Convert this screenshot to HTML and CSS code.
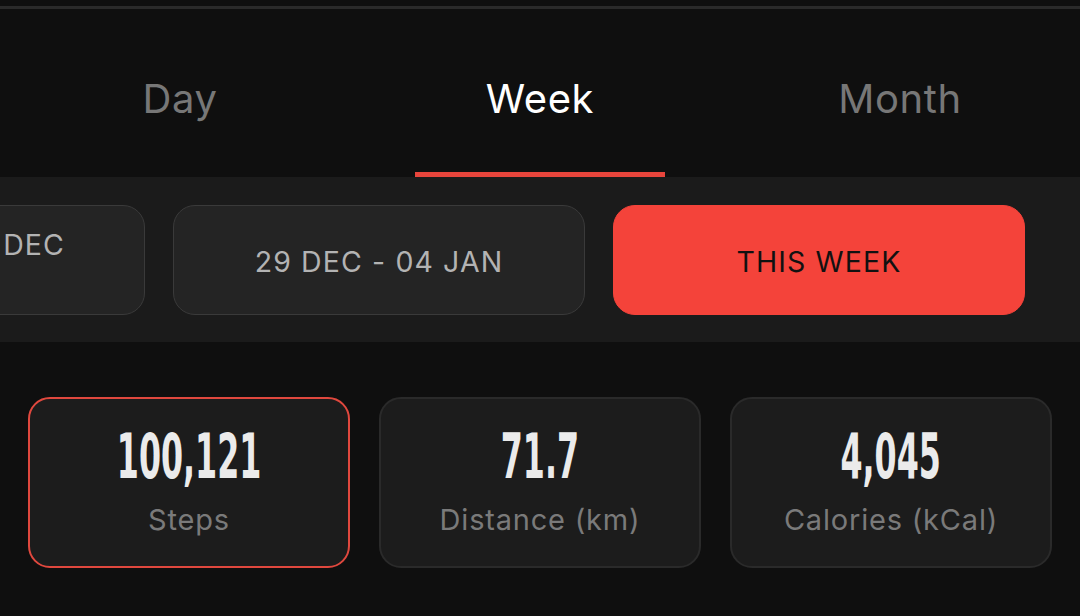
FILE: index.html
```
<!DOCTYPE html>
<html>
<head>
<meta charset="utf-8">
<link rel="stylesheet" href="styles.css">
</head>
<body>
<div class="topline"></div>
<nav class="tabs">
  <div class="tab"><span class="tab-label">Day</span></div>
  <div class="tab tab-active"><span class="tab-label">Week</span><span class="tab-bar"></span></div>
  <div class="tab"><span class="tab-label">Month</span></div>
</nav>
<section class="strip">
  <div class="track">
    <div class="range range-prev"><span>22 DEC - 28 DEC</span></div>
    <div class="range"><span>29 DEC - 04 JAN</span></div>
    <div class="range range-current"><span>THIS WEEK</span></div>
  </div>
</section>
<section class="cards">
  <div class="card card-active">
    <div class="value"><span>100,121</span></div>
    <div class="label">Steps</div>
  </div>
  <div class="card">
    <div class="value"><span>71.7</span></div>
    <div class="label">Distance (km)</div>
  </div>
  <div class="card">
    <div class="value"><span>4,045</span></div>
    <div class="label">Calories (kCal)</div>
  </div>
</section>
</body>
</html>
```
FILE: styles.css
```
html, body {
  margin: 0;
  padding: 0;
  background: #0f0f0f;
  width: 1080px;
  height: 616px;
  overflow: hidden;
  font-family: "Inter", "Liberation Sans", sans-serif;
}
.topline {
  margin-top: 6px;
  height: 3px;
  background: #2a2a2a;
}
.tabs {
  display: grid;
  grid-template-columns: repeat(3, 1fr);
  height: 168px;
}
.tab {
  display: flex;
  flex-direction: column;
  align-items: center;
  padding-top: 66px;
  box-sizing: border-box;
}
.tab-label {
  font-size: 40px;
  line-height: 48px;
  color: #777777;
  letter-spacing: 0.6px;
}
.tab-active .tab-label {
  color: #ffffff;
}
.tab-bar {
  margin-top: auto;
  width: 250px;
  height: 5px;
  background: #e8453c;
}
.strip {
  height: 165px;
  background: #1b1b1b;
  overflow: hidden;
  display: flex;
  align-items: center;
}
.track {
  display: flex;
  gap: 28px;
  margin-left: -267px;
}
.range {
  flex: 0 0 412px;
  height: 110px;
  box-sizing: border-box;
  border: 1px solid #3a3a3a;
  background: #242424;
  border-radius: 22px;
  display: flex;
  align-items: center;
  justify-content: center;
  padding-top: 4px;
  font-size: 28.5px;
  letter-spacing: 1.1px;
  color: #b3b3b3;
}
.range-prev {
  justify-content: flex-end;
  align-items: flex-start;
  padding: 21px 79px 0 0;
}
.range-current {
  background: #f4433a;
  border-color: #f4433a;
  color: #111111;
}
.cards {
  display: grid;
  grid-template-columns: repeat(3, 322px);
  gap: 29px;
  padding: 55px 28px 0;
}
.card {
  height: 171px;
  box-sizing: border-box;
  border: 2px solid #2a2a2a;
  border-radius: 22px;
  background: #1c1c1c;
  display: flex;
  flex-direction: column;
  align-items: center;
}
.card-active {
  border-color: #e0483e;
}
.value {
  margin-top: 22px;
  height: 72px;
  line-height: 72px;
  font-family: "DejaVu Sans Condensed", "Liberation Sans", sans-serif;
  font-weight: 700;
  font-size: 63px;
  color: #ebebeb;
}
.value span {
  display: inline-block;
  transform: scaleX(0.56);
}
.label {
  margin-top: 9px;
  font-size: 29px;
  line-height: 36px;
  letter-spacing: 0.8px;
  color: #7a7a7a;
}
```
